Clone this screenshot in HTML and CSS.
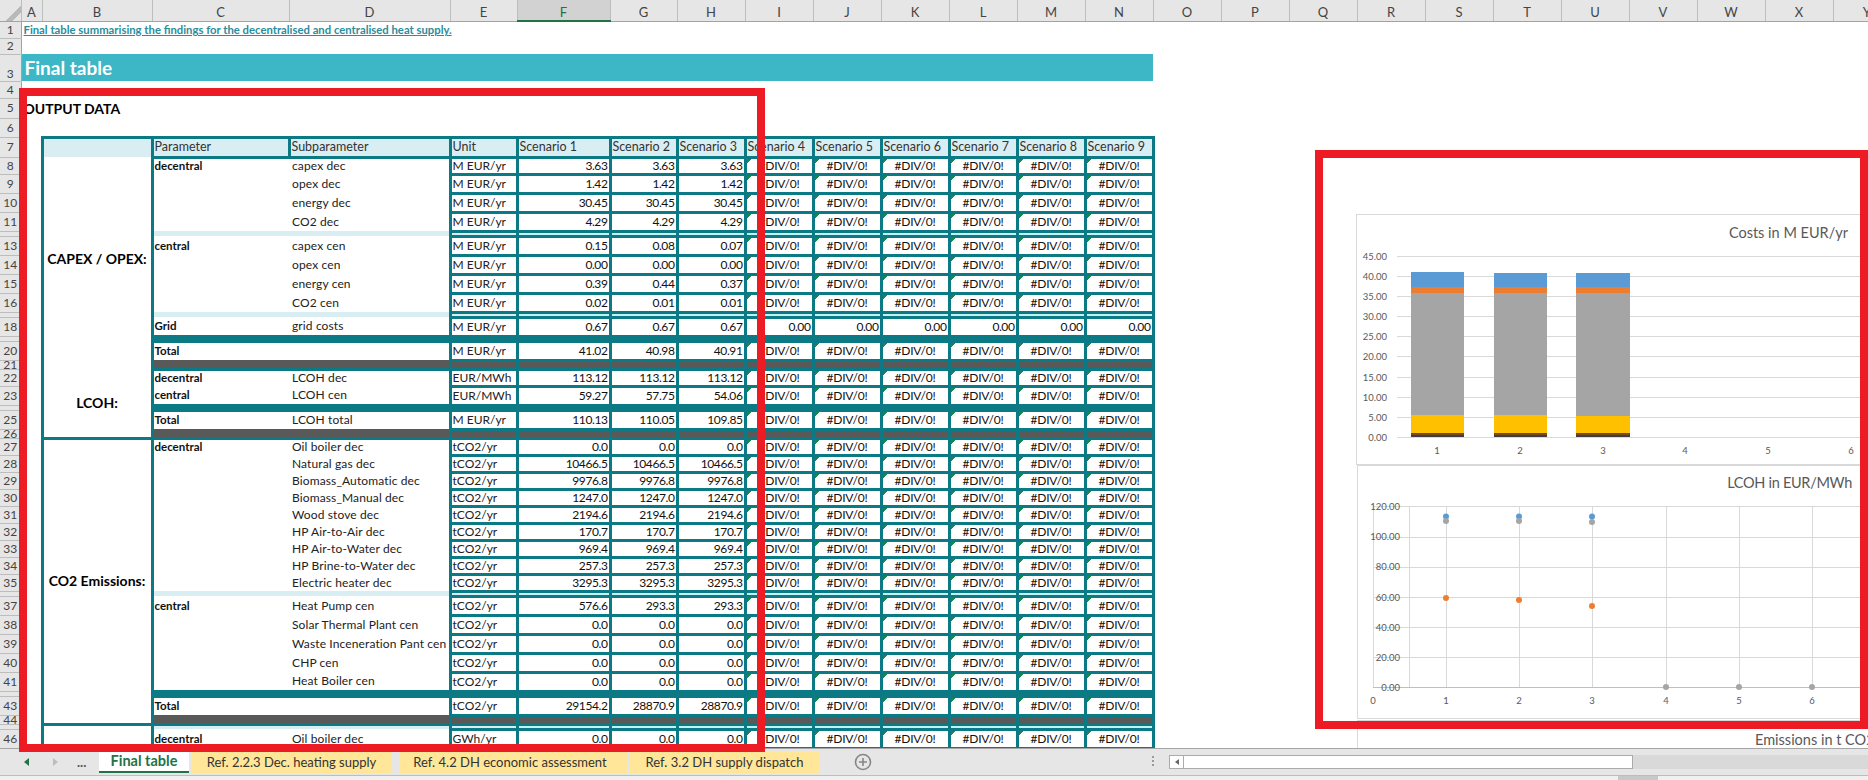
FILE: index.html
```html
<!DOCTYPE html>
<html lang="en">

<head>
    <meta charset="UTF-8">
    <title>Final table</title>
    <link rel="stylesheet" href="styles.css">
</head>

<body>
    <div class="sheet">
        <table class="grid">
            <colgroup>
                <col class="col-rn"><col class="col-a"><col class="col-b"><col class="col-c"><col class="col-d">
                <col class="col-e"><col class="col-f"><col class="col-g"><col span="17">
            </colgroup>
            <thead>
                <tr class="col-heads">
                    <th class="corner"></th><th>A</th><th>B</th><th>C</th><th>D</th><th>E</th><th class="active">F</th><th>G</th><th>H</th><th>I</th><th>J</th><th>K</th><th>L</th><th>M</th><th>N</th><th>O</th><th>P</th><th>Q</th><th>R</th><th>S</th><th>T</th><th>U</th><th>V</th><th>W</th><th>X</th><th>Y</th>
                </tr>
            </thead>
            <tbody id="rows">
                <tr class="h17"><th class="rn">1</th><td class="note" colspan="14">Final table summarising the findings for the decentralised and centralised heat supply.</td></tr>
                <tr class="h16"><th class="rn">2</th></tr>
                <tr class="h27"><th class="rn rn-low">3</th><td class="banner" colspan="14">Final table</td></tr>
                <tr class="h17"><th class="rn">4</th></tr>
                <tr class="h20"><th class="rn">5</th><td class="output" colspan="4">OUTPUT DATA</td></tr>
                <tr class="h19"><th class="rn">6</th></tr>
                <tr class="h20 head-row">
                    <th class="rn">7</th><td></td><td class="blank"></td>
                    <td class="hd">Parameter</td><td class="hd">Subparameter</td><td class="hd">Unit</td>
                    <td class="hd">Scenario 1</td><td class="hd">Scenario 2</td><td class="hd">Scenario 3</td><td class="hd">Scenario 4</td><td class="hd">Scenario 5</td><td class="hd">Scenario 6</td><td class="hd">Scenario 7</td><td class="hd">Scenario 8</td><td class="hd">Scenario 9</td>
                </tr>
            </tbody>
        </table>

        <svg class="chart chart-costs" viewBox="1356 214 512 252">
            <rect class="chart-bg" x="1356.5" y="214.5" width="520" height="250"/>
            <text class="chart-title" x="1848" y="238" text-anchor="end">Costs in M EUR/yr</text>
            <g class="gridlines">
                <line x1="1397" x2="1868" y1="256.5" y2="256.5"/><line x1="1397" x2="1868" y1="276.5" y2="276.5"/>
                <line x1="1397" x2="1868" y1="296.5" y2="296.5"/><line x1="1397" x2="1868" y1="316.5" y2="316.5"/>
                <line x1="1397" x2="1868" y1="336.5" y2="336.5"/><line x1="1397" x2="1868" y1="356.5" y2="356.5"/>
                <line x1="1397" x2="1868" y1="377.5" y2="377.5"/><line x1="1397" x2="1868" y1="397.5" y2="397.5"/>
                <line x1="1397" x2="1868" y1="417.5" y2="417.5"/><line x1="1397" x2="1868" y1="437.5" y2="437.5"/>
            </g>
            <g class="axis-label" text-anchor="end">
                <text x="1387" y="260">45.00</text><text x="1387" y="280">40.00</text><text x="1387" y="300">35.00</text>
                <text x="1387" y="320">30.00</text><text x="1387" y="340">25.00</text><text x="1387" y="360">20.00</text>
                <text x="1387" y="381">15.00</text><text x="1387" y="401">10.00</text><text x="1387" y="421">5.00</text>
                <text x="1387" y="441">0.00</text>
            </g>
            <g>
                <rect class="s-blue" x="1411" y="272" width="53" height="15"/><rect class="s-orange" x="1411" y="287" width="53" height="6"/>
                <rect class="s-gray" x="1411" y="293" width="53" height="122"/><rect class="s-yellow" x="1411" y="415" width="53" height="18"/>
                <rect class="s-brown" x="1411" y="433" width="53" height="2"/><rect class="s-dark" x="1411" y="435" width="53" height="2"/>
                <rect class="s-blue" x="1494" y="273" width="53" height="14"/><rect class="s-orange" x="1494" y="287" width="53" height="6"/>
                <rect class="s-gray" x="1494" y="293" width="53" height="122"/><rect class="s-yellow" x="1494" y="415" width="53" height="18"/>
                <rect class="s-brown" x="1494" y="433" width="53" height="2"/><rect class="s-dark" x="1494" y="435" width="53" height="2"/>
                <rect class="s-blue" x="1576" y="273" width="54" height="14"/><rect class="s-orange" x="1576" y="287" width="54" height="6"/>
                <rect class="s-gray" x="1576" y="293" width="54" height="123"/><rect class="s-yellow" x="1576" y="416" width="54" height="17"/>
                <rect class="s-brown" x="1576" y="433" width="54" height="2"/><rect class="s-dark" x="1576" y="435" width="54" height="2"/>
            </g>
            <g class="axis-label" text-anchor="middle">
                <text x="1437" y="454">1</text><text x="1520" y="454">2</text><text x="1603" y="454">3</text>
                <text x="1685" y="454">4</text><text x="1768" y="454">5</text><text x="1851" y="454">6</text>
            </g>
        </svg>

        <svg class="chart chart-lcoh" viewBox="1356 465 512 255">
            <rect class="chart-bg" x="1357.5" y="465.5" width="520" height="253"/>
            <text class="chart-title title-tight" x="1852" y="488" text-anchor="end">LCOH in EUR/MWh</text>
            <g class="gridlines">
                <line x1="1373" x2="1868" y1="506.5" y2="506.5"/><line x1="1373" x2="1868" y1="537.5" y2="537.5"/>
                <line x1="1373" x2="1868" y1="567.5" y2="567.5"/><line x1="1373" x2="1868" y1="597.5" y2="597.5"/>
                <line x1="1373" x2="1868" y1="627.5" y2="627.5"/><line x1="1373" x2="1868" y1="657.5" y2="657.5"/>
                <line x1="1373.5" x2="1373.5" y1="507" y2="688"/><line x1="1409.5" x2="1409.5" y1="507" y2="688"/>
                <line x1="1446.5" x2="1446.5" y1="507" y2="688"/><line x1="1519.5" x2="1519.5" y1="507" y2="688"/>
                <line x1="1592.5" x2="1592.5" y1="507" y2="688"/><line x1="1666.5" x2="1666.5" y1="507" y2="688"/>
                <line x1="1739.5" x2="1739.5" y1="507" y2="688"/><line x1="1812.5" x2="1812.5" y1="507" y2="688"/>
            </g>
            <line class="baseline" x1="1373" x2="1868" y1="687.5" y2="687.5"/>
            <g class="axis-label" text-anchor="end">
                <text x="1400" y="510">120.00</text><text x="1400" y="540">100.00</text><text x="1400" y="570">80.00</text>
                <text x="1400" y="601">60.00</text><text x="1400" y="631">40.00</text><text x="1400" y="661">20.00</text>
                <text x="1400" y="691">0.00</text>
            </g>
            <g class="axis-label" text-anchor="middle">
                <text x="1373" y="704">0</text><text x="1446" y="704">1</text><text x="1519" y="704">2</text><text x="1592" y="704">3</text>
                <text x="1666" y="704">4</text><text x="1739" y="704">5</text><text x="1812" y="704">6</text>
            </g>
            <circle class="s-blue" cx="1446" cy="516.5" r="3"/><circle class="s-blue" cx="1519" cy="516.5" r="3"/><circle class="s-blue" cx="1592" cy="516.5" r="3"/>
            <circle class="s-gray" cx="1446" cy="521" r="3"/><circle class="s-gray" cx="1519" cy="521" r="3"/><circle class="s-gray" cx="1592" cy="522" r="3"/>
            <circle class="s-orange" cx="1446" cy="598" r="3"/><circle class="s-orange" cx="1519" cy="600" r="3"/><circle class="s-orange" cx="1592" cy="606" r="3"/>
            <circle class="s-gray" cx="1666" cy="687" r="3"/><circle class="s-gray" cx="1739" cy="687" r="3"/><circle class="s-gray" cx="1812" cy="687" r="3"/>
        </svg>

        <div class="chart-next">Emissions in t CO2</div>
    </div>

    <div class="tabbar">
        <div class="tab-nav">
            <svg class="nav-arrow" width="6" height="8" viewBox="0 0 6 8"><path d="M5 0v8L0 4z"/></svg>
            <svg class="nav-arrow off" width="6" height="8" viewBox="0 0 6 8"><path d="M1 0v8l5-4z"/></svg>
            <span class="nav-more">...</span>
        </div>
        <div class="tab tab-on">Final table</div>
        <div class="tab tab-ref tab-2">Ref. 2.2.3 Dec. heating supply</div>
        <div class="tab tab-ref tab-3">Ref. 4.2 DH economic assessment</div>
        <div class="tab tab-ref tab-4">Ref. 3.2 DH supply dispatch</div>
        <svg class="add-sheet" width="18" height="18" viewBox="0 0 18 18">
            <circle cx="9" cy="9" r="7.5"/>
            <path d="M9 5v8M5 9h8"/>
        </svg>
        <div class="dots"></div>
        <div class="hscroll">
            <div class="hscroll-btn"><svg width="4" height="6" viewBox="0 0 4 6"><path d="M4 0v6L0 3z"/></svg></div>
            <div class="hscroll-thumb"></div>
        </div>
    </div>
    <div class="statusbar"><div class="status-mark"></div></div>

    <div class="frame frame-table"></div>
    <div class="frame frame-charts"></div>

    <script src="script.js"></script>
</body>

</html>
```
FILE: styles.css
```css
* {
    box-sizing: border-box;
}

html,
body {
    margin: 0;
    height: 780px;
    overflow: hidden;
}

body {
    position: relative;
    display: flex;
    flex-direction: column;
    font-family: Lato, "Liberation Sans", sans-serif;
    background-color: #fff;
    color: #222;
}

.sheet {
    position: relative;
    height: 748px;
    overflow: hidden;
}

/* grid */
.grid {
    table-layout: fixed;
    border-collapse: collapse;
    width: 1901px;
    font-size: 12px;
    line-height: 14px;
}

col {
    width: 68px;
}

.col-rn,
.col-a {
    width: 21px;
}

.col-b {
    width: 110px;
}

.col-c {
    width: 137px;
}

.col-d {
    width: 161px;
}

.col-e,
.col-g {
    width: 67px;
}

.col-f {
    width: 93px;
}

.grid td,
.grid th {
    padding: 0;
    white-space: nowrap;
    overflow: hidden;
}

.col-heads {
    height: 21px;
}

.col-heads th {
    height: 21px;
    padding-top: 4px;
    font-size: 13px;
    font-weight: 400;
    color: #444;
    background-color: #e6e6e6;
    border-right: 1px solid #bdbdbd;
    border-bottom: 1px solid #a3a3a3;
}

.col-heads th.corner {
    background-image: linear-gradient(135deg, transparent 62%, #b9b9b9 62%, #b9b9b9 80%, transparent 80%);
}

.col-heads th.active {
    color: #217346;
    background-color: #d2d2d2;
    border-bottom: 2px solid #217346;
}

.grid th.rn {
    font-size: 12px;
    font-weight: 400;
    color: #444;
    text-align: center;
    background-color: #e6e6e6;
    border-right: 1px solid #a3a3a3;
    border-bottom: 1px solid #bdbdbd;
}

.rn div {
    height: 8px;
    overflow: hidden;
    line-height: 8px;
}

.rn-low {
    vertical-align: bottom;
}

.h5 {
    height: 5px;
    font-size: 0;
    line-height: 0;
}

.h9 {
    height: 9px;
}

.h16 {
    height: 16px;
}

.h17 {
    height: 17px;
}

.h19 {
    height: 19px;
}

.h20 {
    height: 20px;
}

.h27 {
    height: 27px;
}

.grid .note {
    padding-left: 2px;
    font-weight: 700;
    font-size: 11.3px;
    color: #2c8c9c;
    text-decoration: underline;
}

.grid .banner {
    padding-left: 3px;
    font-size: 19px;
    font-weight: 700;
    line-height: 20px;
    color: #fff;
    background-color: #3db7c6;
}

.grid .output {
    padding: 2px 0 0 2px;
    font-size: 14px;
    font-weight: 700;
    color: #000;
}

/* output table */
.grid .blank {
    background-color: #d9eef3;
    border: 3px solid #0b7a84;
    border-bottom: 0;
}

.grid .hd {
    padding-left: 1px;
    font-size: 12.5px;
    color: #333;
    background-color: #d9eef3;
    border: 3px solid #0b7a84;
}

.grid .grp {
    font-size: 14px;
    font-weight: 700;
    color: #000;
    text-align: center;
    border-left: 3px solid #0b7a84;
    border-right: 3px solid #0b7a84;
}

.grid .grp-end {
    border-bottom: 3px solid #0b7a84;
}

.grid .par {
    padding-left: 1px;
    font-weight: 700;
    font-size: 11.5px;
    color: #111;
}

.grid .sub {
    padding-left: 3px;
    letter-spacing: 0.12px;
    color: #222;
}

.grid .unit,
.grid .val {
    border: 3px solid #0b7a84;
}

.grid .unit {
    padding-left: 1px;
}

.grid .val {
    padding-right: 1px;
    text-align: right;
    font-size: 12px;
    letter-spacing: -0.4px;
    color: #111;
}

.grid .val.err {
    padding-right: 0;
    text-align: center;
    letter-spacing: -0.2px;
    background: linear-gradient(135deg, #138a47 3px, transparent 3px) no-repeat 0 0 / 6px 6px;
}

.grid .pale {
    background-color: #d9eef3;
}

.grid .val.pale {
    background-color: #bff3f5;
}

.grid .fill-teal {
    background-color: #0b7a84;
}

.grid .sub.fill-teal,
.grid .par.fill-teal {
    border-top: 3px solid #0b7a84;
    border-bottom: 3px solid #0b7a84;
}

.grid .fill-dark {
    background-color: #595959;
}

.grid .val.fill-dark {
    border-color: #0b7a84;
}

.grid .par.fill-dark,
.grid .sub.fill-dark {
    border-bottom: 3px solid #0b7a84;
}

/* charts float over the sheet */
.chart {
    position: absolute;
    left: 1356px;
    width: 512px;
}

.chart-costs {
    top: 214px;
    height: 252px;
}

.chart-lcoh {
    top: 465px;
    height: 255px;
}

.chart-bg {
    fill: #fff;
    stroke: #d9d9d9;
}

.chart-title {
    font-size: 14.5px;
    fill: #595959;
}

.title-tight {
    letter-spacing: -0.3px;
}

.gridlines line {
    stroke: #d9d9d9;
    stroke-width: 1;
}

.baseline {
    stroke: #bfbfbf;
    stroke-width: 1;
}

.axis-label {
    font-size: 9.5px;
    fill: #595959;
}

.s-blue {
    fill: #5b9bd5;
}

.s-orange {
    fill: #ed7d31;
}

.s-gray {
    fill: #a5a5a5;
}

.s-yellow {
    fill: #ffc000;
}

.s-brown {
    fill: #7b4a1c;
}

.s-dark {
    fill: #3f3f3f;
}

.chart-next {
    position: absolute;
    left: 1357px;
    top: 720px;
    width: 520px;
    height: 40px;
    padding: 9px 0 0 397px;
    font-size: 14.5px;
    line-height: 18px;
    white-space: nowrap;
    color: #595959;
    background-color: #fff;
    border-left: 1px solid #d9d9d9;
    border-top: 2px solid #d9d9d9;
}

/* sheet tabs */
.tabbar {
    display: flex;
    align-items: flex-start;
    height: 28px;
    font-size: 13px;
    color: #333;
    background-color: #e6e6e6;
    border-top: 1px solid #a6a6a6;
    border-bottom: 1px solid #bdbdbd;
}

.tab-nav {
    display: flex;
    align-items: center;
    width: 99px;
    height: 26px;
    padding-left: 24px;
}

.nav-arrow {
    fill: #217346;
}

.nav-arrow.off {
    margin-left: 22px;
    fill: #bdbdbd;
}

.nav-more {
    margin-left: 19px;
    font-weight: 700;
    color: #555;
}

.tab {
    height: 24px;
    line-height: 24px;
    text-align: center;
    white-space: nowrap;
}

.tab-on {
    width: 90px;
    margin-right: 2px;
    font-size: 14.5px;
    font-weight: 700;
    color: #217346;
    background-color: #fff;
    border-bottom: 2px solid #217346;
}

.tab-ref {
    margin-top: 3px;
    height: 21px;
    line-height: 20px;
    background-color: #ffe699;
}

.tab-2 {
    width: 201px;
    margin-right: 7px;
}

.tab-3 {
    width: 228px;
    margin-right: 3px;
    padding-right: 6px;
}

.tab-4 {
    width: 189px;
}

.add-sheet {
    margin: 4px 0 0 35px;
    fill: none;
    stroke: #868686;
    stroke-width: 1.6;
}

.dots {
    width: 2px;
    height: 11px;
    margin: 7px 0 0 280px;
    background-image: linear-gradient(#9a9a9a 2px, transparent 2px);
    background-size: 2px 4px;
}

.hscroll {
    display: flex;
    flex: 1;
    height: 14px;
    margin: 6px 0 0 15px;
    background-color: #d9d9d9;
}

.hscroll-btn {
    display: flex;
    align-items: center;
    justify-content: center;
    width: 15px;
    background-color: #fff;
    border: 1px solid #ababab;
}

.hscroll-btn path {
    fill: #666;
}

.hscroll-thumb {
    width: 449px;
    background-color: #fff;
    border: 1px solid #ababab;
    border-left: 0;
}

.statusbar {
    flex: 1;
    background-color: #f0f0f0;
}

.status-mark {
    width: 40px;
    height: 100%;
    margin-left: 1618px;
    background-color: #c8c8c8;
}

/* red markup on top of the screenshot */
.frame {
    position: absolute;
    border: 8px solid #ed1c24;
}

.frame-table {
    left: 19px;
    top: 88px;
    width: 746px;
    height: 664px;
}

.frame-charts {
    left: 1315px;
    top: 150px;
    width: 553px;
    height: 579px;
}
```
FILE: script.js
```js
const CAP = "M EUR/yr";
const CO2 = "tCO2/yr";

// [row, height, parameter, subparameter, unit, values] or [row, height, spacer kind]
const rows = [
    [8, 17, "decentral", "capex dec", CAP, ["3.63", "3.63", "3.63"]],
    [9, 19, "", "opex dec", CAP, ["1.42", "1.42", "1.42"]],
    [10, 19, "", "energy dec", CAP, ["30.45", "30.45", "30.45"]],
    [11, 19, "", "CO2 dec", CAP, ["4.29", "4.29", "4.29"]],
    [12, 5, "pale"],
    [13, 19, "central", "capex cen", CAP, ["0.15", "0.08", "0.07"]],
    [14, 19, "", "opex cen", CAP, ["0.00", "0.00", "0.00"]],
    [15, 19, "", "energy cen", CAP, ["0.39", "0.44", "0.37"]],
    [16, 19, "", "CO2 cen", CAP, ["0.02", "0.01", "0.01"]],
    [17, 5, "pale"],
    [18, 19, "Grid", "grid costs", CAP, ["0.67", "0.67", "0.67"], true],
    [19, 5, "teal"],
    [20, 19, "Total", "", CAP, ["41.02", "40.98", "40.91"]],
    [21, 9, "dark"],
    [22, 17, "decentral", "LCOH dec", "EUR/MWh", ["113.12", "113.12", "113.12"]],
    [23, 19, "central", "LCOH cen", "EUR/MWh", ["59.27", "57.75", "54.06"]],
    [24, 5, "teal"],
    [25, 19, "Total", "LCOH total", CAP, ["110.13", "110.05", "109.85"]],
    [26, 9, "dark"],
    [27, 17, "decentral", "Oil boiler dec", CO2, ["0.0", "0.0", "0.0"]],
    [28, 17, "", "Natural gas dec", CO2, ["10466.5", "10466.5", "10466.5"]],
    [29, 17, "", "Biomass_Automatic dec", CO2, ["9976.8", "9976.8", "9976.8"]],
    [30, 17, "", "Biomass_Manual dec", CO2, ["1247.0", "1247.0", "1247.0"]],
    [31, 17, "", "Wood stove dec", CO2, ["2194.6", "2194.6", "2194.6"]],
    [32, 17, "", "HP Air-to-Air dec", CO2, ["170.7", "170.7", "170.7"]],
    [33, 17, "", "HP Air-to-Water dec", CO2, ["969.4", "969.4", "969.4"]],
    [34, 17, "", "HP Brine-to-Water dec", CO2, ["257.3", "257.3", "257.3"]],
    [35, 17, "", "Electric heater dec", CO2, ["3295.3", "3295.3", "3295.3"]],
    [36, 5, "pale"],
    [37, 19, "central", "Heat Pump cen", CO2, ["576.6", "293.3", "293.3"]],
    [38, 19, "", "Solar Thermal Plant cen", CO2, ["0.0", "0.0", "0.0"]],
    [39, 19, "", "Waste Inceneration Pant cen", CO2, ["0.0", "0.0", "0.0"]],
    [40, 19, "", "CHP cen", CO2, ["0.0", "0.0", "0.0"]],
    [41, 19, "", "Heat Boiler cen", CO2, ["0.0", "0.0", "0.0"]],
    [42, 5, "teal"],
    [43, 19, "Total", "", CO2, ["29154.2", "28870.9", "28870.9"]],
    [44, 9, "dark"],
    [45, 5, "pale"],
    [46, 19, "decentral", "Oil boiler dec", "GWh/yr", ["0.0", "0.0", "0.0"]],
];

// merged cells in column B: start row -> [row span, label, closes with a line]
const groups = {
    8: [13, "CAPEX / OPEX:", false],
    21: [1, "", false],
    22: [5, "LCOH:", true],
    27: [18, "CO2 Emissions:", true],
    45: [2, "", false],
};

function groupCell(n) {
    if (!groups[n]) return "";
    const [span, label, closed] = groups[n];
    return `<td class="grp${closed ? " grp-end" : ""}" rowspan="${span}">${label}</td>`;
}

function rowHead(n, h) {
    if (h === 5) return `<th class="rn"></th>`;
    if (h === 9) return `<th class="rn"><div>${n}</div></th>`;
    return `<th class="rn">${n}</th>`;
}

function spacerCells(kind) {
    const cls = { pale: "pale", teal: "fill-teal", dark: "fill-dark" }[kind];
    let html = `<td class="par ${cls}"></td><td class="sub ${cls}"></td><td class="unit ${cls}"></td>`;
    for (let i = 0; i < 9; i++) html += `<td class="val ${cls}"></td>`;
    return html;
}

function dataCells(par, sub, unit, vals, zeros) {
    let html = `<td class="par">${par}</td><td class="sub">${sub}</td><td class="unit">${unit}</td>`;
    vals.forEach(v => { html += `<td class="val">${v}</td>`; });
    for (let i = 0; i < 6; i++) {
        html += zeros ? `<td class="val">0.00</td>` : `<td class="val err">#DIV/0!</td>`;
    }
    return html;
}

const tbody = document.getElementById("rows");
rows.forEach(r => {
    const [n, h] = r;
    const cells = typeof r[3] === "undefined" ? spacerCells(r[2]) : dataCells(r[2], r[3], r[4], r[5], r[6]);
    const tr = document.createElement("tr");
    tr.className = `h${h}`;
    tr.innerHTML = rowHead(n, h) + "<td></td>" + groupCell(n) + cells;
    tbody.appendChild(tr);
});
```
